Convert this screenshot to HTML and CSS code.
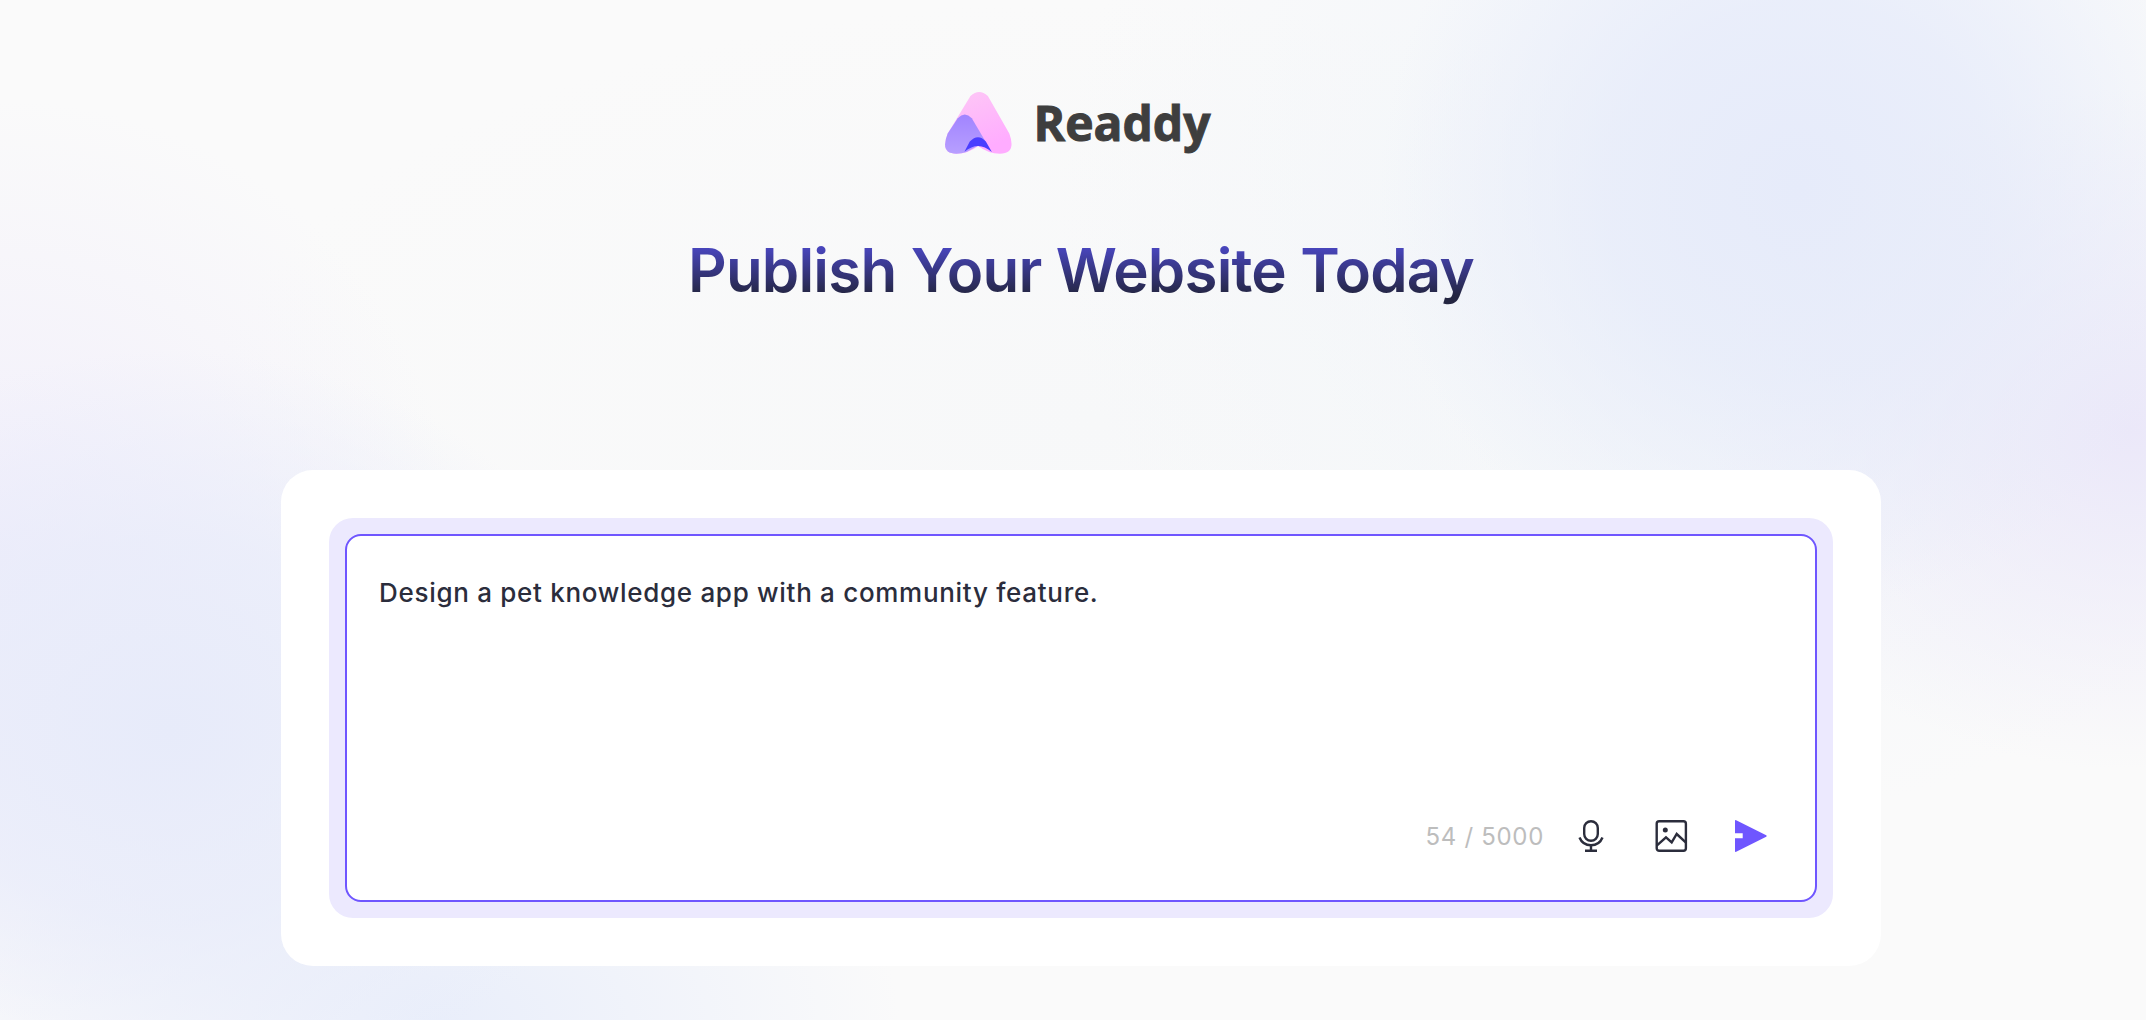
FILE: index.html
```html
<!DOCTYPE html>
<html lang="en">
<head>
    <meta charset="UTF-8">
    <meta name="viewport" content="width=device-width, initial-scale=1.0">
    <title>Readdy</title>
    <link rel="stylesheet" href="styles.css">
</head>
<body>
    <div class="page">
        <div class="brand">
            <svg class="brand-mark" viewBox="70 55 215 200" aria-hidden="true">
                <defs>
                    <linearGradient id="mark-pink" x1="0" y1="0" x2="0.4" y2="1">
                        <stop offset="0" stop-color="#fdc9f5"/>
                        <stop offset="1" stop-color="#ffacff"/>
                    </linearGradient>
                    <linearGradient id="mark-purple" x1="0" y1="0" x2="0" y2="1">
                        <stop offset="0" stop-color="#a184ff"/>
                        <stop offset="1" stop-color="#b79fff"/>
                    </linearGradient>
                </defs>
                <path fill="url(#mark-pink)" d="M152 76Q178 52 204 76L268 188Q290 248 240 248Q205 248 175 225Q145 248 110 248Q60 248 84 188Z"/>
                <path fill="url(#mark-purple)" d="M84 188L114 142Q135 120 156 142L197 212L140 243Q125 248 110 248Q60 248 84 188Z"/>
                <path fill="#4a3dff" d="M134 242L150 212Q175 186 198 212L216 243Q195 225 175 225Q155 225 134 242Z"/>
            </svg>
            <span class="brand-name">Readdy</span>
        </div>
        <h1 class="headline">Publish Your Website Today</h1>
        <div class="card">
            <div class="input-ring">
                <div class="input-box">
                    <p class="prompt">Design a pet knowledge app with a community feature.</p>
                    <div class="toolbar">
                        <span class="counter">54 / 5000</span>
                        <!-- mic -->
                        <svg class="icon" viewBox="0 0 32 32" fill="none" stroke="#2b2d3c" stroke-width="2.4">
                            <rect x="9.2" y="1.2" width="13.6" height="19.6" rx="6.8"/>
                            <path d="M4.5 17.5C6.5 22.5 10.5 25.2 16 25.2S25.5 22.5 27.5 17.5"/>
                            <path d="M16 25.2V30.8M10 30.8H22"/>
                        </svg>
                        <!-- image -->
                        <svg class="icon" viewBox="0 0 32 32" fill="none" stroke="#2b2d3c" stroke-width="2.4">
                            <rect x="1.7" y="1.2" width="29.2" height="29.6" rx="2.5"/>
                            <path d="M1.7 25.7L11 17.3L16.7 22.3L21.7 14L31 22.7"/>
                            <circle cx="10.3" cy="10" r="2.5" fill="#2b2d3c" stroke="none"/>
                        </svg>
                        <!-- send -->
                        <svg class="icon" viewBox="0 0 32 32">
                            <path fill="#6f56ff" d="M0 1Q0 -0.3 1.2 0.3L31.2 15.2Q32.4 16 31.2 16.8L1.2 31.7Q0 32.3 0 31V18.3H7.7V13.3H0Z"/>
                        </svg>
                    </div>
                </div>
            </div>
        </div>
    </div>
</body>
</html>
```

FILE: styles.css
```css
* {
    margin: 0;
    padding: 0;
    box-sizing: border-box;
}

html, body {
    height: 100%;
}

body {
    font-family: Inter, "Liberation Sans", sans-serif;
    overflow: hidden;
    background-color: #fafafa;
    background-image:
        radial-gradient(ellipse 420px 420px at 1800px 190px, #e6ebfa 0%, rgba(230, 235, 250, 0.75) 45%, rgba(230, 235, 250, 0) 100%),
        radial-gradient(ellipse 420px 340px at 2130px 430px, #ebe8f9 0%, rgba(235, 232, 249, 0) 100%),
        radial-gradient(ellipse 660px 600px at 1720px 220px, #f1f5fa 0%, rgba(241, 245, 250, 0) 100%),
        radial-gradient(ellipse 460px 380px at 170px 730px, #e7ebfa 0%, rgba(231, 235, 250, 0.7) 50%, rgba(231, 235, 250, 0) 100%),
        radial-gradient(ellipse 460px 260px at 440px 1020px, #e9eefa 0%, rgba(233, 238, 250, 0) 100%),
        radial-gradient(ellipse 460px 460px at 0px 560px, #f1eefb 0%, rgba(241, 238, 251, 0) 100%),
        radial-gradient(ellipse 900px 420px at 1100px 420px, #f7f8f9 0%, rgba(247, 248, 249, 0) 100%);
}

.page {
    height: 100%;
    display: flex;
    flex-direction: column;
    align-items: center;
    padding-top: 91px;
    padding-left: 16px;
}

.brand {
    display: flex;
    align-items: center;
    gap: 18px;
    height: 62px;
    margin-left: -8px;
}

.brand-mark {
    width: 72px;
    height: 67px;
}

.brand-name {
    font-family: "Open Sans", sans-serif;
    font-size: 48px;
    font-weight: 700;
    color: #3e3e3e;
    -webkit-text-stroke: 1px #3e3e3e;
}

.headline {
    margin-top: 81px;
    font-size: 60px;
    font-weight: 600;
    line-height: 72px;
    letter-spacing: -0.8px;
    background: linear-gradient(180deg, #4845bb 20%, #242642 85%);
    -webkit-background-clip: text;
    background-clip: text;
    color: transparent;
}

.card {
    width: 1600px;
    height: 496px;
    margin-top: 164px;
    padding: 48px;
    background-color: #fff;
    border-radius: 32px;
}

.input-ring {
    height: 100%;
    padding: 16px;
    background-color: #ece9fe;
    border-radius: 24px;
}

.input-box {
    height: 100%;
    display: flex;
    flex-direction: column;
    justify-content: space-between;
    padding: 37px 48px 32px 32px;
    background-color: #fff;
    border: 2px solid #6f56ff;
    border-radius: 16px;
}

.prompt {
    font-size: 26px;
    font-weight: 500;
    line-height: 40px;
    letter-spacing: 0.7px;
    color: #2b2d3c;
}

.toolbar {
    display: flex;
    justify-content: flex-end;
    align-items: center;
    gap: 48px;
    margin-bottom: 16px;
}

.counter {
    margin-right: -17px;
    font-size: 24px;
    letter-spacing: 0.7px;
    color: #bdbdbd;
}

.icon {
    width: 32px;
    height: 32px;
    overflow: visible;
}
```
